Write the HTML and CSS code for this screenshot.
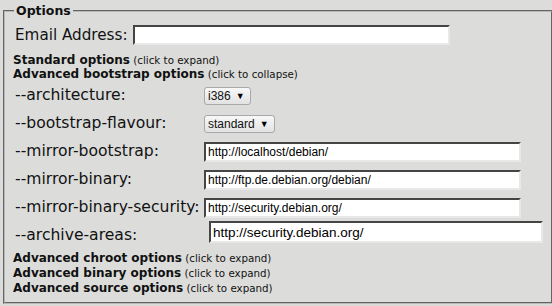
FILE: index.html
```html
<!DOCTYPE html>
<html lang="en">
<head>
<meta charset="UTF-8">
<title>Options</title>
<link rel="stylesheet" href="styles.css">
</head>
<body>
<fieldset class="options">
  <legend>Options</legend>
  <div class="email-row">
    <label for="email">Email Address:</label>
    <input type="text" id="email" class="field">
  </div>
  <div class="section"><b>Standard options</b> <span class="hint">(click to expand)</span></div>
  <div class="section"><b>Advanced bootstrap options</b> <span class="hint">(click to collapse)</span></div>

  <div class="opt-grid">
    <label>--architecture:</label>
    <div><span class="select">i386 <span class="arrow">&#9660;</span></span></div>

    <label>--bootstrap-flavour:</label>
    <div><span class="select">standard <span class="arrow">&#9660;</span></span></div>

    <label>--mirror-bootstrap:</label>
    <div><input type="text" class="field" value="http://localhost/debian/"></div>

    <label>--mirror-binary:</label>
    <div><input type="text" class="field" value="http://ftp.de.debian.org/debian/"></div>

    <label>--mirror-binary-security:</label>
    <div><input type="text" class="field" value="http://security.debian.org/"></div>

    <label>--archive-areas:</label>
    <div class="top"><input type="text" class="field big" value="http://security.debian.org/"></div>
  </div>

  <div class="section tail"><b>Advanced chroot options</b> <span class="hint">(click to expand)</span></div>
  <div class="section tail"><b>Advanced binary options</b> <span class="hint">(click to expand)</span></div>
  <div class="section tail"><b>Advanced source options</b> <span class="hint">(click to expand)</span></div>
</fieldset>
</body>
</html>
```

FILE: styles.css
```css
body { margin: 0; background: #dcdddb; color: #111; font-family: "DejaVu Sans", sans-serif; }
.options { margin: 3px 3px 2px; padding: 7px 8px 6px 8px; border: 2px groove #b8b8b8; min-height: 0; }
.options legend { font-weight: bold; font-size: 12.5px; padding: 0 2px; margin-left: 1px; }
label { font-size: 15.6px; }
.email-row label { font-size: 15.2px; }
.field { box-sizing: border-box; width: 317px; height: 20px; margin: 0; padding: 1px 2px; font: 12px "Liberation Sans", Arial, sans-serif; color: #000; background: #fff; border: 2px inset #e8e8e8; border-top-color: #999; border-left-color: #999; }
.field.big { width: 334px; height: 22px; font-size: 13.5px; margin-left: 5px; }
.email-row { display: flex; align-items: center; gap: 5px; padding-left: 2px; margin-top: 0; height: 20px; }
.section { font-size: 10.3px; height: 14px; line-height: 14px; }
.section b { font-size: 12px; }
.section.tail { height: 15px; line-height: 15px; }
.email-row + .section { margin-top: 8px; }
.opt-grid { display: grid; grid-template-columns: 189px 1fr; grid-auto-rows: 28px; align-items: center; padding-left: 2px; margin-top: 0; margin-bottom: 1px; }
.opt-grid .top { align-self: start; }
.select { display: inline-flex; align-items: center; gap: 5px; height: 18px; box-sizing: border-box; padding: 0 5px 0 3px; font: 12px "Liberation Sans", Arial, sans-serif; color: #111; background: linear-gradient(#f8f8f8, #e2e2e2); border: 1px solid #a8a8a8; border-radius: 3px; }
.arrow { font-size: 9px; color: #000; }
.opt-grid + .section { margin-top: 2px; }
```
